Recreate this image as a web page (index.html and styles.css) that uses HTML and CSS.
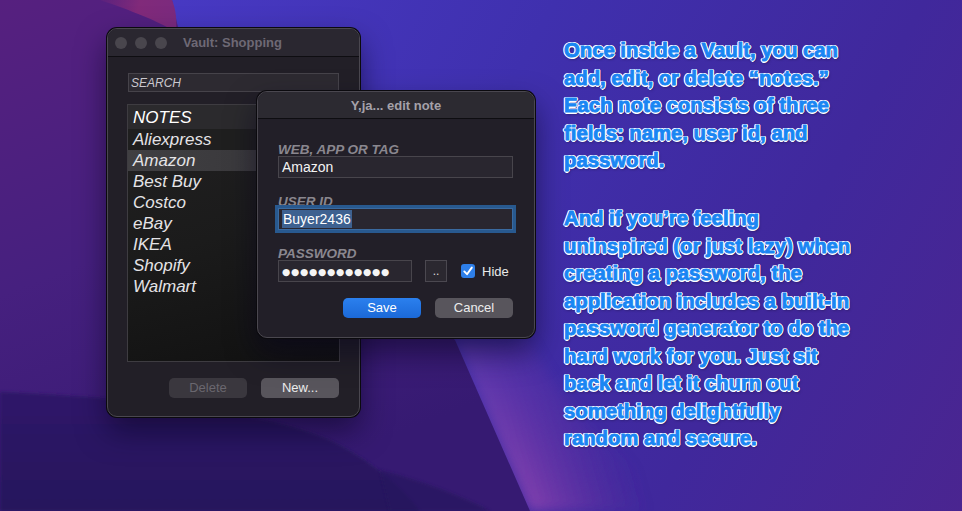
FILE: index.html
```html
<!DOCTYPE html>
<html lang="en">
<head>
<meta charset="utf-8">
<title>Vault: Shopping</title>
<link rel="stylesheet" href="styles.css">
</head>
<body>
<svg class="wallpaper" viewBox="0 0 962 511" aria-hidden="true">
  <defs>
    <linearGradient id="wpBase" x1="0" y1="0" x2="962" y2="511" gradientUnits="userSpaceOnUse">
      <stop offset="0" stop-color="#4b3dcc"/>
      <stop offset="0.45" stop-color="#3f30ae"/>
      <stop offset="0.75" stop-color="#40289c"/>
      <stop offset="1" stop-color="#4a2590"/>
    </linearGradient>
    <linearGradient id="wpLeft" x1="0" y1="0" x2="200" y2="511" gradientUnits="userSpaceOnUse">
      <stop offset="0" stop-color="#56207f"/>
      <stop offset="0.5" stop-color="#46207f"/>
      <stop offset="1" stop-color="#361a72"/>
    </linearGradient>
    <linearGradient id="wpMagenta" x1="100" y1="0" x2="175" y2="20" gradientUnits="userSpaceOnUse">
      <stop offset="0" stop-color="#7a2879" stop-opacity="0.2"/>
      <stop offset="0.5" stop-color="#812a7a"/>
      <stop offset="1" stop-color="#7b2a7e"/>
    </linearGradient>
    <linearGradient id="wpStreak" x1="480" y1="450" x2="620" y2="410" gradientUnits="userSpaceOnUse">
      <stop offset="0" stop-color="#9a52b8"/>
      <stop offset="0.3" stop-color="#7a3cab"/>
      <stop offset="1" stop-color="#5a2d9c" stop-opacity="0"/>
    </linearGradient>
    <linearGradient id="wpStreakFade" x1="0" y1="340" x2="0" y2="511" gradientUnits="userSpaceOnUse">
      <stop offset="0" stop-color="#fff" stop-opacity="0.25"/>
      <stop offset="1" stop-color="#fff" stop-opacity="1"/>
    </linearGradient>
    <mask id="wpStreakMask">
      <rect x="0" y="0" width="962" height="511" fill="url(#wpStreakFade)"/>
    </mask>
    <linearGradient id="wpDark" x1="0" y1="400" x2="0" y2="511" gradientUnits="userSpaceOnUse">
      <stop offset="0" stop-color="#2e1868"/>
      <stop offset="1" stop-color="#26145c"/>
    </linearGradient>
    <filter id="wpSoft" x="-10%" y="-10%" width="120%" height="120%">
      <feGaussianBlur stdDeviation="1.5"/>
    </filter>
    <filter id="wpBlur" x="-20%" y="-20%" width="140%" height="140%">
      <feGaussianBlur stdDeviation="6"/>
    </filter>
  </defs>
  <rect x="0" y="0" width="962" height="511" fill="url(#wpBase)"/>
  <g mask="url(#wpStreakMask)">
    <path d="M455 340 L530 511 L700 511 C630 470 570 420 530 340 Z" fill="url(#wpStreak)" filter="url(#wpBlur)"/>
  </g>
  <path d="M0 0 H172 C180 40 200 120 260 200 C320 270 410 300 455 340 L530 511 H0 Z" fill="url(#wpLeft)"/>
  <path d="M100 0 H172 C176 10 177 20 176 32 C160 22 130 10 100 0 Z" fill="url(#wpMagenta)"/>
  <path d="M0 392 C140 398 260 410 330 440 C370 460 400 485 420 511 H0 Z" fill="url(#wpDark)" filter="url(#wpSoft)"/>
  <path d="M380 470 C420 480 460 495 490 511 H390 Z" fill="#28155e" opacity="0.7" filter="url(#wpSoft)"/>
</svg>

<section class="window main-window">
  <header class="titlebar">
    <div class="lights">
      <span class="light"></span>
      <span class="light"></span>
      <span class="light"></span>
    </div>
    <span class="window-title">Vault: Shopping</span>
  </header>
  <div class="main-body">
    <div class="search">SEARCH</div>
    <ul class="note-list">
      <li class="list-head">NOTES</li>
      <li class="row-alt">Aliexpress</li>
      <li class="row-selected">Amazon</li>
      <li>Best Buy</li>
      <li>Costco</li>
      <li>eBay</li>
      <li>IKEA</li>
      <li>Shopify</li>
      <li>Walmart</li>
    </ul>
    <div class="actions">
      <button class="btn btn-disabled">Delete</button>
      <button class="btn btn-gray">New...</button>
    </div>
  </div>
</section>

<section class="window dialog">
  <header class="titlebar dialog-titlebar">
    <span class="dialog-title">Y,ja... edit note</span>
  </header>
  <div class="dialog-body">
    <div class="field-label">WEB, APP OR TAG</div>
    <div class="field">Amazon</div>
    <div class="field-label gap">USER ID</div>
    <div class="field field-focus"><span class="sel">Buyer2436</span></div>
    <div class="field-label gap">PASSWORD</div>
    <div class="pw-row">
      <div class="field field-pw"><span class="dots">●●●●●●●●●●●●</span></div>
      <button class="gen-btn">..</button>
      <span class="checkbox">
        <svg viewBox="0 0 14 14" width="14" height="14"><path d="M3.3 7.4 L6 10.2 L10.8 3.6" fill="none" stroke="#fff" stroke-width="1.9" stroke-linecap="round" stroke-linejoin="round"/></svg>
      </span>
      <span class="check-label">Hide</span>
    </div>
    <div class="dialog-actions">
      <button class="btn btn-blue">Save</button>
      <button class="btn btn-gray">Cancel</button>
    </div>
  </div>
</section>

<main class="caption">
  <p>Once inside a Vault, you can<br>add, edit, or delete “notes.”<br>Each note consists of three<br>fields: name, user id, and<br>password.</p>
  <p>And if you’re feeling<br>uninspired (or just lazy) when<br>creating a password, the<br>application includes a built-in<br>password generator to do the<br>hard work for you. Just sit<br>back and let it churn out<br>something delightfully<br>random and secure.</p>
</main>
</body>
</html>
```

FILE: styles.css
```css
* {
  box-sizing: border-box;
  margin: 0;
  padding: 0;
}

html, body {
  width: 962px;
  height: 511px;
  overflow: hidden;
}

body {
  position: relative;
  font-family: "Liberation Sans", Arial, sans-serif;
  background: #3f30ae;
  padding: 37px 0 0 564px;
}

.wallpaper {
  position: absolute;
  left: 0;
  top: 0;
  width: 962px;
  height: 511px;
  display: block;
}

/* ---------- windows ---------- */
.window {
  position: absolute;
  display: flex;
  flex-direction: column;
  background: #221f27;
  border: 1px solid #4a474f;
  border-radius: 10px;
  box-shadow: 0 0 0 1px #0b0a0e, 0 14px 30px rgba(8, 4, 30, 0.55);
  overflow: hidden;
}

.main-window {
  left: 107px;
  top: 28px;
  width: 253px;
  height: 389px;
  z-index: 1;
}

.titlebar {
  height: 28px;
  flex: none;
  display: flex;
  align-items: center;
  background: #2a2730;
  border-bottom: 1px solid #0e0d11;
  padding-left: 7px;
}

.lights {
  display: flex;
  gap: 8px;
}

.light {
  width: 12px;
  height: 12px;
  border-radius: 50%;
  background: #49464d;
}

.window-title {
  margin-left: 16px;
  font-size: 13px;
  font-weight: bold;
  color: #6e6975;
}

.main-body {
  flex: 1;
  display: flex;
  flex-direction: column;
  padding: 15px 20px 0 20px;
}

.search {
  width: 211px;
  height: 19px;
  margin-top: 1px;
  border: 1px solid #46434a;
  background: #2d2a31;
  font-size: 12px;
  font-style: italic;
  line-height: 19px;
  color: #cbc8ce;
  padding-left: 2px;
}

.note-list {
  list-style: none;
  margin: 12px 0 0 -1px;
  width: 213px;
  height: 258px;
  border: 1px solid #3e3c41;
  background: linear-gradient(165deg, #222122 0%, #1b1b1b 50%, #111111 100%);
}

.note-list li {
  height: 21px;
  line-height: 22px;
  padding-left: 5px;
  font-size: 17px;
  font-style: italic;
  color: #e4e3e6;
  white-space: nowrap;
}

.note-list .list-head {
  height: 24px;
  line-height: 26px;
  color: #ffffff;
  background: #2b2a2d;
}

.note-list .row-alt {
  background: #1f1f1f;
}

.note-list .row-selected {
  background: linear-gradient(90deg, #403f42, #363538);
}

.actions {
  margin-top: 16px;
  display: flex;
  justify-content: flex-end;
  gap: 14px;
}

.btn {
  width: 78px;
  height: 20px;
  border: none;
  border-radius: 5px;
  font-family: "Liberation Sans", Arial, sans-serif;
  font-size: 13px;
  line-height: 20px;
  text-align: center;
}

.btn-disabled {
  background: #3a373e;
  color: #6a676f;
}

.btn-gray {
  background: #58555c;
  color: #ececec;
}

.btn-blue {
  background: linear-gradient(#2b80ee, #1b69d8);
  color: #ffffff;
}

/* ---------- dialog ---------- */
.dialog {
  left: 257px;
  top: 91px;
  width: 278px;
  height: 247px;
  z-index: 2;
  background: #221f28;
}

.dialog-titlebar {
  height: 27px;
  justify-content: center;
  padding-left: 0;
  background: #2c2a31;
}

.dialog-title {
  font-size: 13px;
  font-weight: bold;
  color: #a5a1a9;
}

.dialog-body {
  flex: 1;
  display: flex;
  flex-direction: column;
  padding: 24px 21px 0 20px;
}

.field-label {
  font-size: 13.5px;
  font-weight: bold;
  font-style: italic;
  line-height: 13px;
  color: #8a878f;
}

.field-label.gap {
  margin-top: 17px;
}

.field {
  width: 235px;
  height: 22px;
  border: 1px solid #48454c;
  background: #29262f;
  font-size: 14px;
  line-height: 20px;
  color: #f3f3f3;
  padding-left: 3px;
  white-space: nowrap;
}

.field-focus {
  border-color: #3a6aa0;
  box-shadow: 0 0 0 3px #28598f;
}

.sel {
  background: #3d6190;
  color: #ffffff;
  padding: 1px 1px;
}

.pw-row {
  display: flex;
  align-items: center;
}

.field-pw {
  width: 134px;
}

.dots {
  font-family: "DejaVu Sans", sans-serif;
  font-size: 9.5px;
  letter-spacing: 0.7px;
  color: #f4f4f4;
  vertical-align: 1px;
}

.gen-btn {
  margin-left: 13px;
  width: 22px;
  height: 22px;
  border: 1px solid #4b4850;
  background: #2b2830;
  color: #d8d8d8;
  font-family: "Liberation Sans", Arial, sans-serif;
  font-size: 12px;
  line-height: 20px;
}

.checkbox {
  margin-left: 14px;
  width: 14px;
  height: 14px;
  border-radius: 3px;
  background: #2e7fe9;
  display: flex;
}

.check-label {
  margin-left: 7px;
  font-size: 13px;
  color: #e9e9e9;
}

.dialog-actions {
  margin-top: 16px;
  display: flex;
  justify-content: flex-end;
  gap: 14px;
  width: 235px;
}

/* ---------- caption ---------- */
.caption {
  position: relative;
  z-index: 3;
}

.caption p {
  font-size: 20.3px;
  font-weight: bold;
  line-height: 27.5px;
  color: #1a86f3;
  white-space: nowrap;
  -webkit-text-stroke: 0.9px #1a86f3;
  text-shadow:
    -1.5px 0 0 #fff, 1.5px 0 0 #fff, 0 -1.5px 0 #fff, 0 1.5px 0 #fff,
    -1.1px -1.1px 0 #fff, 1.1px -1.1px 0 #fff, -1.1px 1.1px 0 #fff, 1.1px 1.1px 0 #fff,
    1px 2px 3px rgba(0, 0, 0, 0.5);
}

.caption p + p {
  margin-top: 30.5px;
}
```
